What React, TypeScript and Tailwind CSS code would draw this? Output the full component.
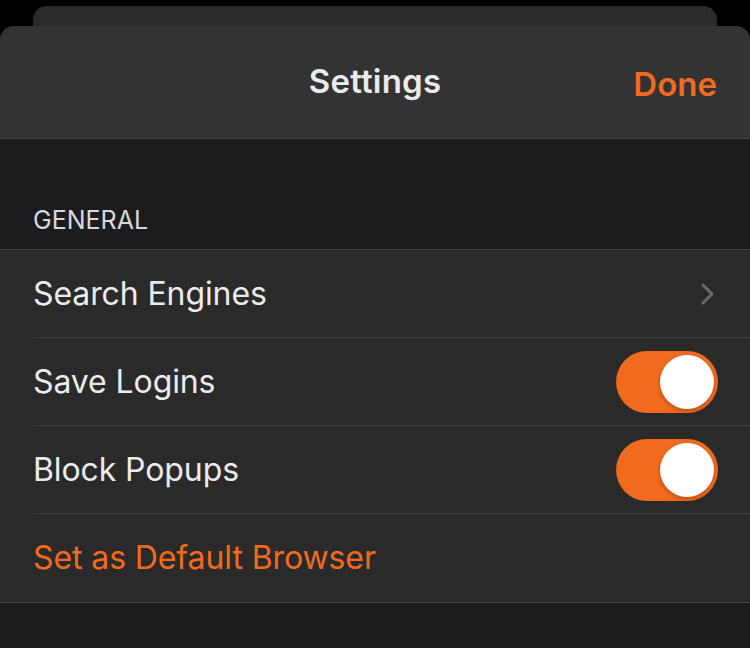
const font = { fontFamily: 'Inter, "Noto Sans", sans-serif' };

function Toggle() {
  return (
    <div className="flex h-[62px] w-[102px] items-center justify-end rounded-full bg-[#f26a1e] pr-[4px]">
      <div className="h-[54px] w-[54px] rounded-full bg-white shadow-[0_2px_4px_rgba(0,0,0,0.25)]" />
    </div>
  );
}

function Chevron() {
  return (
    <svg width="16" height="24" viewBox="0 0 16 24" fill="none" className="mr-[2px]">
      <path d="M3 3l9 9-9 9" stroke="#6b6b6d" strokeWidth="3" strokeLinecap="round" strokeLinejoin="round" />
    </svg>
  );
}

function Row({ label, right, orange, last }: { label: string; right?: React.ReactNode; orange?: boolean; last?: boolean }) {
  return (
    <div className={`flex h-[88px] items-center justify-between pr-[32px] ${last ? "" : "border-b border-[#3d3d3f]"}`}>
      <span className={`text-[32px] tracking-[-0.1px] ${orange ? "text-[#f26a1e]" : "text-[#ebebeb]"}`}>{label}</span>
      {right}
    </div>
  );
}

export default function App() {
  return (
    <div className="h-[648px] w-[750px] overflow-hidden bg-black" style={font}>
      <div className="mx-[33px] mt-[6px] h-[20px] rounded-t-[14px] bg-[#2b2b2c]" />
      <div className="flex h-[622px] flex-col overflow-hidden rounded-t-[14px] bg-[#1c1c1e]">
        <div className="relative flex h-[113px] shrink-0 items-center justify-center border-b border-[#414143] bg-[#333334]">
          <span className="text-[33px] font-semibold text-[#ebebeb] tracking-[0.2px]">Settings</span>
          <span className="absolute right-[33px] top-[34px] text-[33px] font-semibold text-[#f26a1e]">Done</span>
        </div>
        <div className="flex h-[110px] shrink-0 items-end px-[33px] pb-[10px]">
          <span className="text-[25px] text-[#d8d8da]">GENERAL</span>
        </div>
        <div className="border-y border-[#424244] bg-[#2a2a2b] pl-[33px]">
          <Row label="Search Engines" right={<Chevron />} />
          <Row label="Save Logins" right={<Toggle />} />
          <Row label="Block Popups" right={<Toggle />} />
          <Row label="Set as Default Browser" orange last />
        </div>
      </div>
    </div>
  );
}
